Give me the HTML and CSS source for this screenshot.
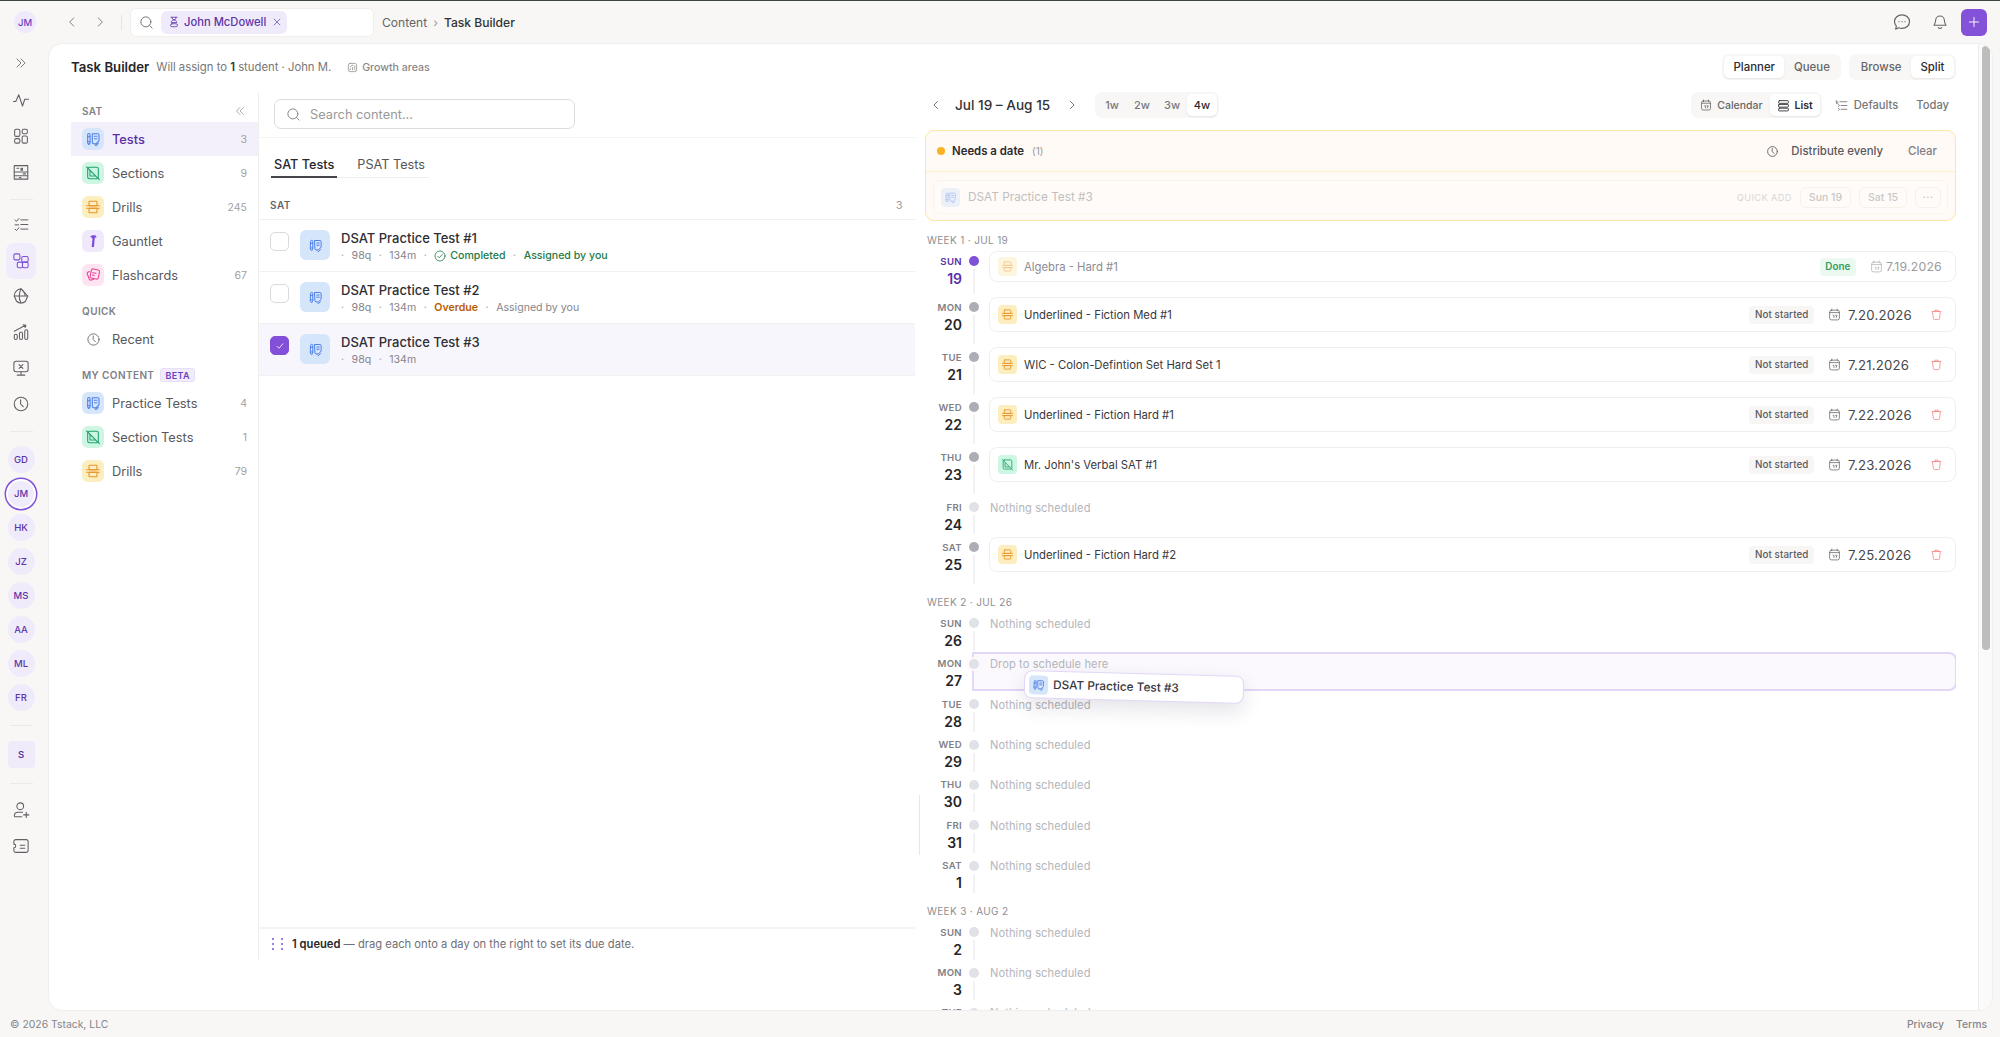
FILE: index.html
```html
<!DOCTYPE html>
<html lang="en">
<head>
<meta charset="utf-8">
<title>Task Builder</title>
<link rel="stylesheet" href="styles.css">
</head>
<body>
<svg class="sprite" xmlns="http://www.w3.org/2000/svg">
  <symbol id="i-test" viewBox="0 0 24 24"><path d="M4 5.500a1.800 1.800 0 0 1 3.600 0V18l-1.800 2.500L4 18z"/><path d="M4 8.500h3.600M4 16h3.600"/><path d="M11 4h8a2 2 0 0 1 2 2v8.500L17 19h-4a2 2 0 0 1-2-2z"/><path d="M14 8h4M14 11.500h4"/><path d="M15 20.500l1.500 1.500 3.500-3.500"/></symbol>
  <symbol id="i-section" viewBox="0 0 24 24"><rect x="4" y="3.500" width="16" height="17" rx="2.500"/><path d="M2.500 3 21.500 22"/><path d="M7.500 9v7.500H15"/></symbol>
  <symbol id="i-drill" viewBox="0 0 24 24"><rect x="6" y="3.500" width="12" height="6.500" rx="1"/><rect x="6" y="14" width="12" height="6.500" rx="1"/><path d="M2.500 10h19M2.500 14h19"/></symbol>
  <symbol id="i-hammer" viewBox="0 0 24 24"><path class="solid" d="M7.500 5.500 11 3.500h4.500l2 2.500-2.500 1-.5 2-1 12h-3.500l1.300-12-1-2z"/></symbol>
  <symbol id="i-cards" viewBox="0 0 24 24"><rect x="8.500" y="3.500" width="12.500" height="14" rx="2.500" transform="rotate(12 14.700 10.500)"/><path d="M6.500 6.800 4.300 8a2 2 0 0 0-.9 2.600l3 7.500a2.500 2.500 0 0 0 3.200 1.400l3.400-1.300"/><path d="M11.500 8.500l5 1M11 12l3 .6"/></symbol>
  <symbol id="i-clock" viewBox="0 0 24 24"><circle cx="12" cy="12" r="9"/><path d="M11.500 6.500V12l3.500 3.500"/></symbol>
  <symbol id="i-search" viewBox="0 0 24 24"><circle cx="11" cy="11" r="8"/><path d="M17 17l4 4"/></symbol>
  <symbol id="i-cal" viewBox="0 0 24 24"><rect x="3" y="4" width="18" height="18" rx="3.500"/><path d="M7 2v3M17 2v3M3 8.500h18"/><path d="M9.500 13.500h1.500v4M14 13.500h2.500l-1.500 4"/></symbol>
  <symbol id="i-trash" viewBox="0 0 24 24"><path d="M5 6.500h14l-1.300 13a2 2 0 0 1-2 1.800H8.300a2 2 0 0 1-2-1.800z"/><path d="M4 6.500h16M9 6.500V4h6v2.500"/></symbol>
  <symbol id="i-left" viewBox="0 0 24 24"><path d="M15 5l-7 7 7 7"/></symbol>
  <symbol id="i-right" viewBox="0 0 24 24"><path d="M9 5l7 7-7 7"/></symbol>
  <symbol id="i-double" viewBox="0 0 24 24"><path d="M5 5l7 7-7 7M12 5l7 7-7 7"/></symbol>
  <symbol id="i-dleft" viewBox="0 0 24 24"><path d="M12 5l-7 7 7 7M19 5l-7 7 7 7"/></symbol>
  <symbol id="i-pulse" viewBox="0 0 24 24"><path d="M2 14h3l4-9 5 15 3-9h5"/></symbol>
  <symbol id="i-grid" viewBox="0 0 24 24"><rect x="3.500" y="3" width="7" height="9.500" rx="2"/><rect x="13.500" y="3" width="7" height="6" rx="2"/><rect x="3.500" y="15.500" width="7" height="6" rx="2"/><rect x="13.500" y="12" width="7" height="9.500" rx="2"/></symbol>
  <symbol id="i-store" viewBox="0 0 24 24"><path d="M3 3.500h18v18H3z"/><path d="M3 12h18M3 17h18M6.500 7h2.500M12 7h2v2.500h-2zM15 14.500h3M10 19.500h2"/></symbol>
  <symbol id="i-list" viewBox="0 0 24 24"><path d="M11 5.500h10M11 12h10M11 18.500h10"/><path d="M3 5.500l2 2 3.500-4M3 12.500h5M3 18.500l2 2 3.500-4"/></symbol>
  <symbol id="i-content" viewBox="0 0 24 24"><rect x="2.500" y="2.500" width="8" height="8" rx="2"/><rect x="13" y="6" width="8.500" height="7.500" rx="2"/><rect x="7" y="13.500" width="7" height="7.500" rx="2"/><rect x="14" y="13.500" width="7.500" height="7.500" rx="2"/></symbol>
  <symbol id="i-globe" viewBox="0 0 24 24"><path d="M12 2.500 21 12l-3 7a9 9 0 0 1-12 0L3 12a9.500 9.500 0 0 1 9-9.500z"/><path d="M3 12h18M12 2.500c-3 6-3 13 0 19M12 2.500c4 3 5.500 6 5.500 9.500"/></symbol>
  <symbol id="i-chart" viewBox="0 0 24 24"><rect x="3" y="15" width="4" height="7" rx="2"/><rect x="10" y="12" width="4" height="10" rx="2"/><rect x="17" y="9" width="4" height="13" rx="2"/><path d="M3 11 18 3M15 2.500l3.500.5-1 3"/></symbol>
  <symbol id="i-screen" viewBox="0 0 24 24"><rect x="2.500" y="3" width="19" height="14" rx="3"/><path d="M12 17v4M7 21.500h10M9.500 7.500l5 5M14.500 7.500l-5 5"/></symbol>
  <symbol id="i-userplus" viewBox="0 0 24 24"><circle cx="11" cy="7" r="4.500"/><path d="M14 15H8a5 5 0 0 0-5 4.500c0 1 .7 1.500 1.500 1.500H13"/><path d="M19 15v7M15.500 18.500h7"/></symbol>
  <symbol id="i-ticket" viewBox="0 0 24 24"><path d="M5 3.500h14a2.500 2.500 0 0 1 2.500 2.500v12a2.500 2.500 0 0 1-2.500 2.500H5A2.500 2.500 0 0 1 2.500 18v-3.500a2.500 2.500 0 0 0 0-5V6A2.500 2.500 0 0 1 5 3.500z"/><path d="M11 11h6M11 15h6"/></symbol>
  <symbol id="i-chat" viewBox="0 0 24 24"><path d="M12 2.500c5.500 0 10 3.900 10 9s-4.500 9-10 9c-1.500 0-3-.3-4.300-.8L3.500 21.500l1-4A8.500 8.500 0 0 1 2 11.500c0-5.100 4.500-9 10-9z"/><path d="M8 11.500h.01M12 11.500h.01M16 11.500h.01"/></symbol>
  <symbol id="i-bell" viewBox="0 0 24 24"><path d="M12 3a6.500 6.500 0 0 0-6.500 6.500c0 4-2 6-2.500 7.500h18c-.5-1.500-2.500-3.500-2.500-7.500A6.500 6.500 0 0 0 12 3z"/><path d="M9.500 20.500a3 3 0 0 0 5 0"/></symbol>
  <symbol id="i-plus" viewBox="0 0 24 24"><path d="M12 4v16M4 12h16"/></symbol>
  <symbol id="i-x" viewBox="0 0 24 24"><path d="M5 5l14 14M19 5 5 19"/></symbol>
  <symbol id="i-student" viewBox="0 0 24 24"><path d="M6 2.500h12M8 2.500c0 3.500 1.500 5 4 5s4-1.500 4-5"/><path d="M12 7.500c-3 0-5.500 2.500-5.500 5.500h11c0-3-2.500-5.500-5.500-5.500z"/><rect x="5" y="15.500" width="14" height="6" rx="3"/></symbol>
  <symbol id="i-growth" viewBox="0 0 24 24"><rect x="3" y="3" width="18" height="18" rx="4"/><path d="M7 17v-3M12 17v-5M17 17V9M7 10l5-3 2 1"/></symbol>
  <symbol id="i-stack" viewBox="0 0 24 24"><rect x="3" y="3" width="18" height="5" rx="1.500"/><rect x="3" y="10" width="18" height="5" rx="1"/><rect x="3" y="17" width="18" height="5" rx="1.500"/></symbol>
  <symbol id="i-defaults" viewBox="0 0 24 24"><path d="M9 5h13M11 12h11M11 19h11"/><path d="M2.500 3.500 6 6.500l-2 2zM6 10l2.500 2-2 2M6 17l2.500 2-2 2"/></symbol>
  <symbol id="i-checkc" viewBox="0 0 24 24"><circle cx="12" cy="12" r="10"/><path d="M7.500 12.500l3 3 6-6.500"/></symbol>
  <symbol id="i-check" viewBox="0 0 24 24"><path d="M6 12.500l4 4 8-9"/></symbol>
</svg>

<div class="app">
  <header class="topbar">
    <span class="top-avatar">JM</span>
    <button class="nav-btn first"><svg class="ic ic-14"><use href="#i-left"/></svg></button>
    <button class="nav-btn"><svg class="ic ic-14"><use href="#i-right"/></svg></button>
    <span class="top-sep"></span>
    <div class="top-search">
      <svg class="ic ic-15 search-ic"><use href="#i-search"/></svg>
      <span class="chip">
        <svg class="ic ic-12"><use href="#i-student"/></svg>
        <span>John McDowell</span>
        <svg class="ic ic-10"><use href="#i-x"/></svg>
      </span>
    </div>
    <div class="crumbs"><span>Content</span><span class="crumb-sep">›</span><span class="crumb-now">Task Builder</span></div>
    <div class="top-right">
      <svg class="ic ic-18 chat-ic"><use href="#i-chat"/></svg>
      <svg class="ic ic-16 bell-ic"><use href="#i-bell"/></svg>
      <button class="plus-btn"><svg class="ic ic-14"><use href="#i-plus"/></svg></button>
    </div>
  </header>

  <div class="middle">
    <nav class="rail">
      <span class="rail-btn rail-first"><svg class="ic ic-14"><use href="#i-double"/></svg></span>
      <span class="rail-btn gap-1"><svg class="ic ic-18"><use href="#i-pulse"/></svg></span>
      <span class="rail-btn"><svg class="ic ic-18"><use href="#i-grid"/></svg></span>
      <span class="rail-btn"><svg class="ic ic-18"><use href="#i-store"/></svg></span>
      <span class="rail-sep sep-a"></span>
      <span class="rail-btn tight"><svg class="ic ic-17"><use href="#i-list"/></svg></span>
      <span class="rail-btn tight active"><svg class="ic ic-18"><use href="#i-content"/></svg></span>
      <span class="rail-btn tight"><svg class="ic ic-18"><use href="#i-globe"/></svg></span>
      <span class="rail-btn tight"><svg class="ic ic-18"><use href="#i-chart"/></svg></span>
      <span class="rail-btn tight"><svg class="ic ic-18"><use href="#i-screen"/></svg></span>
      <span class="rail-btn tight"><svg class="ic ic-18"><use href="#i-clock"/></svg></span>
      <span class="rail-sep sep-b"></span>
      <span class="rail-av"><span class="av">GD</span></span>
      <span class="rail-av"><span class="av selected">JM</span></span>
      <span class="rail-av"><span class="av">HK</span></span>
      <span class="rail-av"><span class="av">JZ</span></span>
      <span class="rail-av"><span class="av">MS</span></span>
      <span class="rail-av"><span class="av">AA</span></span>
      <span class="rail-av"><span class="av">ML</span></span>
      <span class="rail-av"><span class="av">FR</span></span>
      <span class="rail-sep sep-c"></span>
      <span class="av square">S</span>
      <span class="rail-sep sep-d"></span>
      <span class="rail-btn"><svg class="ic ic-18"><use href="#i-userplus"/></svg></span>
      <span class="rail-btn"><svg class="ic ic-18"><use href="#i-ticket"/></svg></span>
    </nav>

    <main class="card">
      <div class="card-main">
        <div class="page-head">
          <strong class="page-title">Task Builder</strong>
          <span class="page-sub">Will assign to <b>1</b> student · John M.</span>
          <span class="growth"><svg class="ic ic-11"><use href="#i-growth"/></svg>Growth areas</span>
          <div class="head-right">
            <div class="seg"><span class="seg-item on">Planner</span><span class="seg-item">Queue</span></div>
            <div class="seg"><span class="seg-item">Browse</span><span class="seg-item on">Split</span></div>
          </div>
        </div>

        <div class="columns">
          <div class="left-block">
            <aside class="sidebar">
              <div class="side-label first">SAT<svg class="ic ic-12 collapse"><use href="#i-dleft"/></svg></div>
              <div class="side-row on"><span class="tile blue"><svg class="ic ic-16"><use href="#i-test"/></svg></span><span class="side-name">Tests</span><span class="side-count">3</span></div>
              <div class="side-row"><span class="tile green"><svg class="ic ic-16"><use href="#i-section"/></svg></span><span class="side-name">Sections</span><span class="side-count">9</span></div>
              <div class="side-row"><span class="tile amber"><svg class="ic ic-16"><use href="#i-drill"/></svg></span><span class="side-name">Drills</span><span class="side-count">245</span></div>
              <div class="side-row"><span class="tile violet"><svg class="ic ic-16"><use href="#i-hammer"/></svg></span><span class="side-name">Gauntlet</span></div>
              <div class="side-row"><span class="tile pink"><svg class="ic ic-16"><use href="#i-cards"/></svg></span><span class="side-name">Flashcards</span><span class="side-count">67</span></div>
              <div class="side-label">QUICK</div>
              <div class="side-row"><span class="tile plain"><svg class="ic ic-15"><use href="#i-clock"/></svg></span><span class="side-name">Recent</span></div>
              <div class="side-label">MY CONTENT<span class="beta">BETA</span></div>
              <div class="side-row"><span class="tile blue"><svg class="ic ic-16"><use href="#i-test"/></svg></span><span class="side-name">Practice Tests</span><span class="side-count">4</span></div>
              <div class="side-row"><span class="tile green"><svg class="ic ic-16"><use href="#i-section"/></svg></span><span class="side-name">Section Tests</span><span class="side-count">1</span></div>
              <div class="side-row"><span class="tile amber"><svg class="ic ic-16"><use href="#i-drill"/></svg></span><span class="side-name">Drills</span><span class="side-count">79</span></div>
            </aside>

            <section class="list-panel">
              <div class="list-search">
                <div class="search-box"><svg class="ic ic-15"><use href="#i-search"/></svg><span>Search content...</span></div>
              </div>
              <div class="tabs"><span class="tab on">SAT Tests</span><span class="tab">PSAT Tests</span></div>
              <div class="group-head"><span>SAT</span><span class="group-count">3</span></div>
              <div class="item">
                <span class="box"></span>
                <span class="item-tile"><svg class="ic ic-15"><use href="#i-test"/></svg></span>
                <div class="item-body">
                  <div class="item-title">DSAT Practice Test #1</div>
                  <div class="meta"><i>·</i><span>98q</span><i>·</i><span>134m</span><i>·</i><span class="ok"><svg class="ic ic-12"><use href="#i-checkc"/></svg>Completed</span><i>·</i><span class="ok">Assigned by you</span></div>
                </div>
              </div>
              <div class="item">
                <span class="box"></span>
                <span class="item-tile"><svg class="ic ic-15"><use href="#i-test"/></svg></span>
                <div class="item-body">
                  <div class="item-title">DSAT Practice Test #2</div>
                  <div class="meta"><i>·</i><span>98q</span><i>·</i><span>134m</span><i>·</i><span class="late">Overdue</span><i>·</i><span>Assigned by you</span></div>
                </div>
              </div>
              <div class="item picked">
                <span class="box checked"><svg class="ic ic-12"><use href="#i-check"/></svg></span>
                <span class="item-tile"><svg class="ic ic-15"><use href="#i-test"/></svg></span>
                <div class="item-body">
                  <div class="item-title">DSAT Practice Test #3</div>
                  <div class="meta"><i>·</i><span>98q</span><i>·</i><span>134m</span></div>
                </div>
              </div>
              <div class="queue-foot">
                <span class="grip-dots"><b></b><b></b><b></b><b></b><b></b><b></b></span>
                <span><strong>1 queued</strong> — drag each onto a day on the right to set its due date.</span>
              </div>
            </section>
          </div>

          <div class="gutter"><span class="gutter-line"></span></div>

          <section class="planner">
            <div class="plan-nav">
              <svg class="ic ic-12 plan-prev"><use href="#i-left"/></svg>
              <span class="plan-range">Jul 19 – Aug 15</span>
              <svg class="ic ic-12 plan-next"><use href="#i-right"/></svg>
              <div class="seg weeks"><span class="seg-item">1w</span><span class="seg-item">2w</span><span class="seg-item">3w</span><span class="seg-item on">4w</span></div>
              <div class="plan-right">
                <div class="seg views">
                  <span class="seg-item"><svg class="ic ic-12"><use href="#i-cal"/></svg>Calendar</span>
                  <span class="seg-item on"><svg class="ic ic-13"><use href="#i-stack"/></svg>List</span>
                </div>
                <span class="plan-link defaults"><svg class="ic ic-13"><use href="#i-defaults"/></svg>Defaults</span>
                <span class="plan-link today">Today</span>
              </div>
            </div>

            <div class="needs">
              <div class="needs-head">
                <span class="needs-dot"></span>
                <strong>Needs a date</strong>
                <span class="needs-num">(1)</span>
                <span class="needs-act"><svg class="ic ic-13"><use href="#i-clock"/></svg><span>Distribute evenly</span></span>
                <span class="needs-clear">Clear</span>
              </div>
              <div class="needs-body">
                <div class="needs-row">
                  <span class="mini blue"><svg class="ic ic-13"><use href="#i-test"/></svg></span>
                  <span class="needs-name">DSAT Practice Test #3</span>
                  <span class="quick">QUICK ADD</span>
                  <span class="quick-chip">Sun 19</span>
                  <span class="quick-chip">Sat 15</span>
                  <span class="quick-chip more">···</span>
                </div>
              </div>
            </div>

            <div class="week first">WEEK 1 · JUL 19</div>
            <div class="day today-row short">
              <div class="date"><span class="dow">SUN</span><span class="num">19</span></div>
              <div class="spine"><span class="dot full"></span><span class="line"></span></div>
              <div class="task faded"><span class="mini amber"><svg class="ic ic-13"><use href="#i-drill"/></svg></span><span class="task-name">Algebra - Hard #1</span><span class="badge done">Done</span><svg class="ic ic-13 task-cal"><use href="#i-cal"/></svg><span class="task-date small">7.19.2026</span></div>
            </div>
            <div class="day">
              <div class="date"><span class="dow">MON</span><span class="num">20</span></div>
              <div class="spine"><span class="dot full"></span><span class="line"></span></div>
              <div class="task"><span class="mini amber"><svg class="ic ic-13"><use href="#i-drill"/></svg></span><span class="task-name">Underlined - Fiction Med #1</span><span class="badge">Not started</span><svg class="ic ic-13 task-cal"><use href="#i-cal"/></svg><span class="task-date">7.20.2026</span><svg class="ic ic-13 trash"><use href="#i-trash"/></svg></div>
            </div>
            <div class="day">
              <div class="date"><span class="dow">TUE</span><span class="num">21</span></div>
              <div class="spine"><span class="dot full"></span><span class="line"></span></div>
              <div class="task"><span class="mini amber"><svg class="ic ic-13"><use href="#i-drill"/></svg></span><span class="task-name">WIC - Colon-Defintion Set Hard Set 1</span><span class="badge">Not started</span><svg class="ic ic-13 task-cal"><use href="#i-cal"/></svg><span class="task-date">7.21.2026</span><svg class="ic ic-13 trash"><use href="#i-trash"/></svg></div>
            </div>
            <div class="day">
              <div class="date"><span class="dow">WED</span><span class="num">22</span></div>
              <div class="spine"><span class="dot full"></span><span class="line"></span></div>
              <div class="task"><span class="mini amber"><svg class="ic ic-13"><use href="#i-drill"/></svg></span><span class="task-name">Underlined - Fiction Hard #1</span><span class="badge">Not started</span><svg class="ic ic-13 task-cal"><use href="#i-cal"/></svg><span class="task-date">7.22.2026</span><svg class="ic ic-13 trash"><use href="#i-trash"/></svg></div>
            </div>
            <div class="day">
              <div class="date"><span class="dow">THU</span><span class="num">23</span></div>
              <div class="spine"><span class="dot full"></span><span class="line"></span></div>
              <div class="task"><span class="mini green"><svg class="ic ic-13"><use href="#i-section"/></svg></span><span class="task-name">Mr. John's Verbal SAT #1</span><span class="badge">Not started</span><svg class="ic ic-13 task-cal"><use href="#i-cal"/></svg><span class="task-date">7.23.2026</span><svg class="ic ic-13 trash"><use href="#i-trash"/></svg></div>
            </div>
            <div class="day empty">
              <div class="date"><span class="dow">FRI</span><span class="num">24</span></div>
              <div class="spine"><span class="dot"></span><span class="line"></span></div>
              <div class="nothing">Nothing scheduled</div>
            </div>
            <div class="day">
              <div class="date"><span class="dow">SAT</span><span class="num">25</span></div>
              <div class="spine"><span class="dot full"></span><span class="line"></span></div>
              <div class="task"><span class="mini amber"><svg class="ic ic-13"><use href="#i-drill"/></svg></span><span class="task-name">Underlined - Fiction Hard #2</span><span class="badge">Not started</span><svg class="ic ic-13 task-cal"><use href="#i-cal"/></svg><span class="task-date">7.25.2026</span><svg class="ic ic-13 trash"><use href="#i-trash"/></svg></div>
            </div>

            <div class="week">WEEK 2 · JUL 26</div>
            <div class="day empty"><div class="date"><span class="dow">SUN</span><span class="num">26</span></div><div class="spine"><span class="dot"></span><span class="line"></span></div><div class="nothing">Nothing scheduled</div></div>
            <div class="day empty drop">
              <span class="drop-zone"></span>
              <div class="date"><span class="dow">MON</span><span class="num">27</span></div>
              <div class="spine"><span class="dot ringed"></span></div>
              <div class="nothing">Drop to schedule here</div>
              <div class="ghost"><span class="mini blue"><svg class="ic ic-13"><use href="#i-test"/></svg></span><span>DSAT Practice Test #3</span></div>
            </div>
            <div class="day empty"><div class="date"><span class="dow">TUE</span><span class="num">28</span></div><div class="spine"><span class="dot"></span><span class="line"></span></div><div class="nothing">Nothing scheduled</div></div>
            <div class="day empty"><div class="date"><span class="dow">WED</span><span class="num">29</span></div><div class="spine"><span class="dot"></span><span class="line"></span></div><div class="nothing">Nothing scheduled</div></div>
            <div class="day empty"><div class="date"><span class="dow">THU</span><span class="num">30</span></div><div class="spine"><span class="dot"></span><span class="line"></span></div><div class="nothing">Nothing scheduled</div></div>
            <div class="day empty"><div class="date"><span class="dow">FRI</span><span class="num">31</span></div><div class="spine"><span class="dot"></span><span class="line"></span></div><div class="nothing">Nothing scheduled</div></div>
            <div class="day empty"><div class="date"><span class="dow">SAT</span><span class="num">1</span></div><div class="spine"><span class="dot"></span><span class="line"></span></div><div class="nothing">Nothing scheduled</div></div>

            <div class="week">WEEK 3 · AUG 2</div>
            <div class="day empty"><div class="date"><span class="dow">SUN</span><span class="num">2</span></div><div class="spine"><span class="dot"></span><span class="line"></span></div><div class="nothing">Nothing scheduled</div></div>
            <div class="day empty"><div class="date"><span class="dow">MON</span><span class="num">3</span></div><div class="spine"><span class="dot"></span><span class="line"></span></div><div class="nothing">Nothing scheduled</div></div>
            <div class="day empty"><div class="date"><span class="dow">TUE</span><span class="num">4</span></div><div class="spine"><span class="dot"></span><span class="line"></span></div><div class="nothing">Nothing scheduled</div></div>
          </section>
        </div>
      </div>
      <div class="track"><span class="thumb"></span></div>
    </main>
  </div>

  <footer class="foot">
    <span>© 2026 Tstack, LLC</span>
    <span class="foot-links"><span>Privacy</span><span>Terms</span></span>
  </footer>
</div>
</body>
</html>
```

FILE: styles.css
```css
* { box-sizing: border-box; }
html, body { margin: 0; height: 100%; }
body {
  font-family: Inter, "Liberation Sans", sans-serif;
  font-size: 12px;
  color: #2b2b30;
  background: #f8f7f5;
  overflow: hidden;
}
button { font: inherit; border: 0; background: none; padding: 0; }
.sprite { display: none; }
.ic {
  flex: none;
  fill: none;
  stroke: currentColor;
  stroke-width: 1.6;
  stroke-linecap: round;
  stroke-linejoin: round;
  display: block;
}
.solid { fill: currentColor; stroke: none; }
.ic-10 { width: 10px; height: 10px; }
.ic-11 { width: 11px; height: 11px; }
.ic-12 { width: 12px; height: 12px; }
.ic-13 { width: 13px; height: 13px; }
.ic-14 { width: 14px; height: 14px; }
.ic-15 { width: 15px; height: 15px; }
.ic-16 { width: 16px; height: 16px; }
.ic-17 { width: 17px; height: 17px; }
.ic-18 { width: 18px; height: 18px; }

.app { height: 1037px; display: flex; flex-direction: column; }

/* top bar */
.topbar {
  height: 43px;
  flex: none;
  display: flex;
  align-items: center;
  padding: 0 13px 0 14px;
  border-top: 1px solid #3f4543;
}
.top-avatar {
  width: 22px; height: 22px; border-radius: 50%;
  background: #efe9fb; color: #6a3fc0;
  display: flex; align-items: center; justify-content: center;
  font-size: 9.5px; font-weight: 500;
}
.nav-btn { width: 28px; height: 28px; display: flex; align-items: center; justify-content: center; color: #777; }
.nav-btn.first { margin-left: 22px; }
.top-sep { width: 1px; height: 15px; background: #e6e5e2; margin-left: 7px; }
.top-search {
  width: 244px; height: 29px; margin-left: 8px;
  background: #fff; border: 1px solid #f0efed; border-radius: 6px;
  display: flex; align-items: center;
}
.search-ic { margin-left: 8px; color: #777; }
.chip {
  margin-left: 7px;
  width: 126px; height: 23px; border-radius: 6px;
  background: #f0ebfb; color: #5b35a8;
  display: flex; align-items: center; padding-left: 7px; gap: 4px;
  font-size: 11.2px; font-weight: 500; white-space: nowrap;
}
.chip .ic-10 { margin-left: 2px; }
.crumbs { margin-left: 8px; display: flex; align-items: center; gap: 6px; font-size: 12.1px; color: #666; }
.crumb-sep { color: #999; }
.crumb-now { color: #333; font-weight: 500; }
.top-right { margin-left: auto; display: flex; align-items: center; color: #666; }
.bell-ic { margin-left: 21px; }
.plus-btn {
  margin-left: 13px;
  width: 26px; height: 27px; border-radius: 6px;
  background: #8352d9; color: #fff;
  display: flex; align-items: center; justify-content: center;
}

/* layout */
.middle { flex: 1; min-height: 0; display: flex; }
.rail { width: 48px; flex: none; display: flex; flex-direction: column; align-items: center; padding-top: 2px; padding-right: 6px; color: #5f5f64; }
.rail .ic { stroke-width: 1.4; }
.rail-btn { width: 30px; height: 36px; flex: none; display: flex; align-items: center; justify-content: center; border-radius: 8px; }
.gap-1 { margin-top: 1px; }
.rail-btn.tight { height: 35.8px; }
.rail-btn.active { background: #f1ecfc; color: #7c4dd6; }
.rail-sep { width: 23px; height: 1px; background: #eceae7; flex: none; }
.sep-a { margin: 9px 0 7px; }
.sep-b { margin: 9px 0 11px; }
.sep-c { margin: 10px 0 15.5px; }
.sep-d { margin: 14.5px 0 8px; }
.rail-av { height: 34px; flex: none; display: flex; align-items: center; }
.av {
  width: 27px; height: 27px; border-radius: 50%;
  background: #f0ebfb; color: #5b35a8; flex: none;
  display: flex; align-items: center; justify-content: center;
  font-size: 9.5px; font-weight: 500;
}
.av.selected { width: 26px; height: 26px; box-shadow: 0 0 0 2px #fff, 0 0 0 3.5px #7f50d8; }
.av.square { border-radius: 4px; font-weight: 600; }

.card {
  flex: 1; min-width: 0;
  margin-right: 7px;
  background: #fff;
  border: 1px solid #efeeec;
  border-radius: 14px;
  display: flex;
  overflow: hidden;
}
.card-main { flex: 1; min-width: 0; display: flex; flex-direction: column; padding: 10px 22px 0 22px; }
.track { width: 14px; flex: none; background: #fafafa; border-left: 1px solid #ececec; padding: 2px 2px 0 3px; }
.thumb { display: block; width: 8px; height: 604px; border-radius: 4px; background: #bdbdbd; }

/* page head */
.page-head { height: 26px; flex: none; display: flex; align-items: center; }
.page-title { font-size: 13.2px; font-weight: 600; color: #26262a; }
.page-sub { margin-left: 7px; color: #777; font-size: 11.3px; }
.page-sub b { color: #333; font-weight: 600; }
.growth { margin-left: 16px; display: flex; align-items: center; gap: 4px; color: #888; font-size: 10.6px; font-weight: 500; }
.head-right { margin-left: auto; display: flex; gap: 8px; }
.seg { display: flex; padding: 2px; border-radius: 7px; background: #f8f7f6; height: 26px; }
.seg-item {
  display: flex; align-items: center; justify-content: center; gap: 5px;
  padding: 0 8px; border-radius: 5px; color: #666; font-size: 11.4px; font-weight: 500;
}
.seg-item.on { background: #fff; color: #2b2b30; box-shadow: 0 1px 2px rgba(0,0,0,.08); }
.head-right .seg-item { padding: 0 9.5px; }

.columns { flex: 1; min-height: 0; margin-top: 12px; display: flex; }
.left-block { width: 844px; flex: none; display: flex; margin-bottom: 51px; }

/* sidebar */
.sidebar { width: 188px; flex: none; border-right: 1px solid #efeeec; padding-top: 8px; }
.side-label {
  height: 22px; margin-top: 8px; padding: 0 11px;
  display: flex; align-items: center;
  font-size: 10px; font-weight: 600; letter-spacing: .4px; color: #808086;
}
.side-label.first { margin-top: 0; }
.collapse { margin-left: auto; color: #999; margin-right: 1px; }
.beta {
  margin-left: 6px; padding: 0 4px; height: 14px; border-radius: 3px;
  background: #f1ecfc; border: 1px solid #e6dff7; color: #6a3fc0; font-size: 9px;
  display: flex; align-items: center; letter-spacing: .4px;
}
.side-row { height: 34px; display: flex; align-items: center; gap: 8px; padding: 0 11px; color: #58585e; font-size: 12.8px; }
.side-row.on { background: #f3f0fb; color: #5b2fa8; font-weight: 500; }
.side-count { margin-left: auto; font-size: 10.5px; color: #a0a0a5; font-weight: 400; }
.tile { width: 22px; height: 22px; flex: none; border-radius: 6px; display: flex; align-items: center; justify-content: center; }
.tile.plain { color: #777; background: none; }
.blue { background: #d6e6fa; color: #4f7fe8; }
.green { background: #cdf7e2; color: #22a070; }
.amber { background: #fdeec0; color: #e8922a; }
.violet { background: #efe9fb; color: #7c4dd6; }
.pink { background: #fde4f0; color: #e8459a; }

/* list */
.list-panel { flex: 1; min-width: 0; display: flex; flex-direction: column; }
.list-search { height: 46px; flex: none; padding: 7px 0 0 15px; border-bottom: 1px solid #f3f3f2; }
.search-box {
  width: 301px; height: 30px; border: 1px solid #dcdcdc; border-radius: 7px;
  display: flex; align-items: center; gap: 9px; padding-left: 11px;
  color: #999; font-size: 12.8px;
}
.search-box .ic { color: #888; }
.tabs { height: 40px; flex: none; margin-left: 12px; width: 158px; display: flex; align-items: flex-end; border-bottom: 1px solid #efeeec; }
.tab { padding: 0 3px 3.5px; line-height: 16px; margin-right: 17px; font-size: 12.7px; color: #555; margin-bottom: -1px; border-bottom: 2px solid transparent; }
.tab:last-child { margin-right: 0; }
.tab.on { color: #26262a; font-weight: 500; border-bottom-color: #44444a; }
.group-head {
  height: 42px; flex: none; padding: 12px 12px 0 11px;
  display: flex; align-items: center; justify-content: space-between;
  font-size: 10px; font-weight: 600; letter-spacing: .5px; color: #666;
  border-bottom: 1px solid #f1f1f0;
}
.group-count { color: #a0a0a5; font-size: 11px; font-weight: 400; }
.item { height: 52px; flex: none; display: flex; padding: 0 0 0 11px; border-bottom: 1px solid #f1f1f0; }
.item.picked { background: #f8f6fd; }
.box {
  width: 19px; height: 19px; margin-top: 12px; flex: none;
  border: 1px solid #dadada; border-radius: 5px; background: #fff;
  display: flex; align-items: center; justify-content: center;
}
.box.checked { background: #8250d8; border-color: #8250d8; color: #fff; }
.item-tile {
  width: 30px; height: 30px; margin: 10px 0 0 11px; flex: none;
  border-radius: 6px; background: #d6e6fa; color: #4f7fe8;
  display: flex; align-items: center; justify-content: center;
}
.item-body { margin-left: 11px; padding-top: 8.5px; }
.item-title { font-size: 13px; font-weight: 500; line-height: 18px; color: #2e2e33; }
.meta { margin-top: 2.5px; display: flex; align-items: center; gap: 7.5px; font-size: 10.6px; line-height: 14px; color: #85858b; }
.meta i { font-style: normal; color: #aaa; }
.meta .ok { color: #1e7a45; font-weight: 500; display: flex; align-items: center; gap: 4px; }
.meta .late { color: #b85c00; font-weight: 600; }
.queue-foot {
  margin-top: auto; height: 32px; flex: none;
  border-top: 2px solid #f4f4f3;
  display: flex; align-items: center; gap: 9px;
  padding: 0 0 0 13px; font-size: 11.2px; color: #6f6f75;
}
.queue-foot strong { color: #26262a; font-weight: 600; }
.grip-dots { width: 11px; display: grid; grid-template-columns: 2px 2px; justify-content: space-between; row-gap: 3px; }
.grip-dots b { width: 2px; height: 2px; border-radius: 50%; background: #7c4dd6; }

.gutter { width: 10px; flex: none; padding: 703px 0 0 4px; }
.gutter-line { display: block; width: 1px; height: 60px; background: #e8e7e5; }

/* planner */
.planner { flex: 1; min-width: 0; overflow: hidden; }
.plan-nav { height: 26px; display: flex; align-items: center; }
.plan-prev { margin-left: 5px; color: #555; }
.plan-range { margin-left: 13px; width: 99px; font-size: 13.6px; font-weight: 500; color: #333; white-space: nowrap; }
.plan-next { margin-left: 12px; color: #555; }
.weeks { margin-left: 17px; }
.weeks .seg-item { padding: 0 8px; width: 30px; color: #77777c; font-size: 11px; }
.weeks .seg-item.on { color: #2b2b30; }
.plan-right { margin-left: auto; display: flex; align-items: center; }
.views .seg-item { font-size: 10.5px; padding: 0 7px; }
.views .seg-item.on { font-weight: 600; }
.plan-link { display: flex; align-items: center; gap: 6px; color: #777; font-size: 11.2px; font-weight: 500; }
.defaults { margin-left: 13px; }
.today { margin-left: 18px; margin-right: 7px; }

.needs { margin-top: 12px; height: 91px; border: 1px solid #fbe6a6; border-radius: 9px; background: #fffaf5; overflow: hidden; }
.needs-head { height: 41px; display: flex; align-items: center; padding: 0 18px 0 11px; border-bottom: 1px solid #fbeec9; font-size: 11.4px; color: #2b2b30; }
.needs-head strong { margin-left: 7px; font-weight: 600; }
.needs-dot { width: 8px; height: 8px; border-radius: 50%; background: #fbb124; }
.needs-num { margin-left: 8px; font-size: 10px; color: #999; }
.needs-act { margin-left: auto; display: flex; align-items: center; gap: 12px; color: #58585e; font-weight: 500; }
.needs-clear { margin-left: 25px; color: #808086; font-weight: 500; }
.needs-body { padding: 8px 7px; }
.needs-row {
  height: 34px; border: 1px solid #f9f3ea; border-radius: 7px;
  display: flex; align-items: center; padding: 0 6px 0 7px; background: #fffbf8;
}
.needs-row > * { opacity: .45; }
.needs-name { margin-left: 8px; font-size: 11.8px; color: #777; }
.quick { margin-left: auto; font-size: 9.2px; letter-spacing: .4px; color: #aaa; }
.quick-chip { margin-left: 8px; height: 21px; padding: 0 8px; border: 1px solid #eee6dc; border-radius: 6px; display: flex; align-items: center; font-size: 10.5px; color: #888; font-weight: 500; }
.quick-chip.more { width: 26px; justify-content: center; padding: 0; letter-spacing: .5px; }
.mini { width: 19px; height: 19px; flex: none; border-radius: 4px; display: flex; align-items: center; justify-content: center; }

.week { height: 18px; margin-top: 6px; margin-bottom: 2px; padding-left: 2px; display: flex; align-items: center; font-size: 10px; letter-spacing: .35px; color: #8e8e93; font-weight: 400; }
.week.first { margin-top: 10px; }

.day { position: relative; height: 50px; display: flex; }
.day.short { height: 46px; }
.day.empty { height: 40.4px; }
.date { width: 37px; flex: none; display: flex; flex-direction: column; align-items: flex-end; padding-top: 3.5px; }
.dow { line-height: 14px; font-size: 9.6px; font-weight: 600; letter-spacing: .35px; color: #808086; }
.num { line-height: 19.5px; font-size: 14px; font-weight: 600; color: #26262a; }
.today-row .dow, .today-row .num { color: #5b2fa8; }
.spine { width: 10px; margin: 0 10px 0 7px; flex: none; display: flex; flex-direction: column; align-items: center; padding-top: 5px; }
.dot { width: 10px; height: 10px; border-radius: 50%; background: #e1e2e7; flex: none; }
.dot.full { background: #adadb5; }
.today-row .dot { background: #7f50d8; }
.dot.ringed { box-shadow: 0 0 0 2px #fbf9fe; position: relative; }
.line { width: 1.5px; flex: 1; margin: 3px 0 3px; background: #f2f2f4; }
.nothing { padding: 3.5px 0 0 1px; line-height: 15px; font-size: 11.1px; letter-spacing: .1px; color: #b5b5ba; position: relative; }

.task {
  flex: 1; min-width: 0; height: 35px;
  border: 1px solid #efefef; border-radius: 8px; background: #fff;
  display: flex; align-items: center; padding: 0 12px 0 8px;
}
.short .task { height: 31px; }
.task-name { margin-left: 7px; margin-right: auto; font-size: 11.3px; color: #38383d; }
.badge { height: 18px; padding: 0 5.5px; border-radius: 4px; background: #f7f6f4; color: #5a5a60; font-size: 9.8px; font-weight: 500; display: flex; align-items: center; letter-spacing: .1px; }
.badge.done { background: #ecf9f1; color: #2f9e5d; font-weight: 600; }
.task-cal { margin-left: 14px; color: #777; }
.task-date { margin-left: 7px; font-size: 13.2px; color: #45454a; letter-spacing: .2px; width: 65px; }
.task-date.small { font-size: 12.3px; width: 56px; margin-left: 3px; white-space: nowrap; }
.trash { margin-left: 17px; color: #f58f8f; }
.faded .task-name { color: #8c8c91; }
.faded .mini, .faded .task-cal { opacity: .5; }
.faded .task-date { color: #9b9ba0; }
.task.faded { padding-right: 13px; }

.drop-zone {
  position: absolute; left: 47px; right: -1px; top: -2px; height: 39px;
  border: 2px solid #e2d7f7; border-radius: 0 8px 8px 0; background: #fbf9fe;
}
.drop .spine { position: relative; }
.ghost {
  position: absolute; left: 99px; top: 19px; width: 220px; height: 28px;
  display: flex; align-items: center; gap: 5px; padding-left: 4px;
  background: #fff; border: 1px solid #e2d7f7; border-radius: 8px;
  box-shadow: 0 8px 20px rgba(30,20,60,.12);
  transform: rotate(1.5deg);
  font-size: 11.8px; font-weight: 500; color: #38383d;
  z-index: 2;
}

.foot { height: 26px; flex: none; display: flex; align-items: center; justify-content: space-between; padding: 0 13px 0 10px; font-size: 10.4px; color: #85858b; }
.foot-links { display: flex; gap: 12px; font-weight: 500; }
```
